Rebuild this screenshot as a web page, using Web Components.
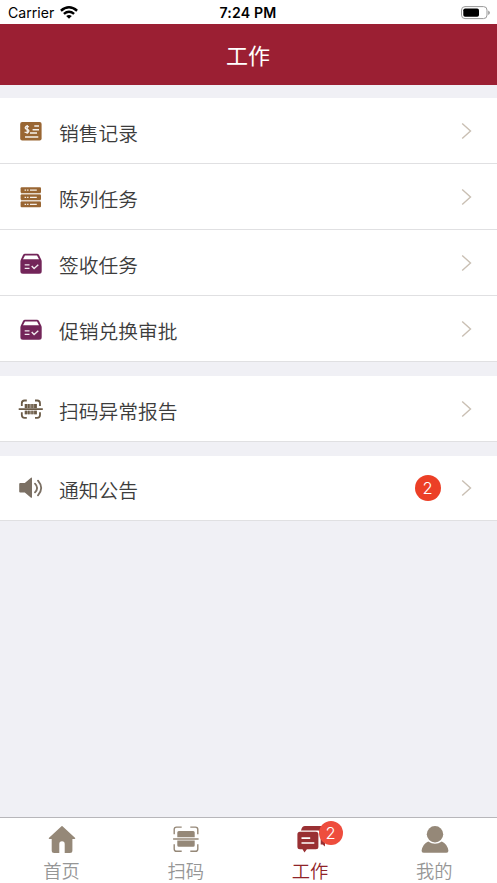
<!DOCTYPE html>
<html lang="zh-CN">
<head>
<meta charset="utf-8">
<meta name="viewport" content="width=device-width">
<title>工作</title>
<style>
html, body { margin: 0; height: 100%; overflow: hidden; background: #f0f0f5; }
body { font-family: "Noto Sans CJK SC", sans-serif; }
</style>
</head>
<body>
<work-app></work-app>
<script>
const ICONS = {
  card: `<rect x="3.2" y="5" width="21.4" height="18.6" rx="2" fill="#996633"/>
    <g fill="none" stroke="#fff" stroke-opacity=".9" stroke-width="1.5"><path d="M17.3 9.1h4.7M15.6 12.7h6.4M13 16.1h7M8 19.9h13.3"/><path stroke-width="1.3" d="M11.8 9.9Q9.5 8.5 8.5 10t1.6 2.3 1.4 2.5-3.9 .2M10.2 8v8.7"/></g>`,
  shelves: `<rect x="4" y="5" width="19.5" height="19" fill="#996633" opacity=".25"/><g fill="#996633"><rect x="3.6" y="4.3" width="20.4" height="5.8" rx="1"/><rect x="3.6" y="11.5" width="20.4" height="5.6" rx="1"/><rect x="3.6" y="18.5" width="20.4" height="5.8" rx="1"/></g>
    <g stroke="#fff" stroke-opacity=".9" stroke-width="1.3"><path d="M13 7.2h6.8M13 14.3h6.8M13 21.4h6.8"/><path d="M7.6 7.2h1.5m1 0h1.4M7.6 14.3h1.5m1 0h1.4M7.6 21.4h1.5m1 0h1.4"/></g>`,
  box: `<path fill="#732559" d="M8 4.8h12q1.3 0 2 1.2l2.2 4.5q.5 1 .5 2v9.8q0 2.5-2.5 2.5H5.9q-2.5 0-2.5-2.5v-9.8q0-1 .5-2L6 6q.7-1.2 2-1.2z"/><path fill="#fff" d="M8 6.4h12l2 3.8H6z"/><path fill="none" stroke="#fff" stroke-opacity=".9" stroke-width="1.4" d="M7.7 15.9h4.8M7.7 19.4h4.8M14.7 17.1l2.4 2.4 4.2-3.7"/>`,
  barcode: `<g fill="none" stroke="#6b5b47" stroke-width="1.8"><path d="M4.8 11V8.3Q4.8 5.5 7.6 5.5h2.2M18 5.5h2.2q2.8 0 2.8 2.8V11M4.8 17.3V20q0 2.8 2.8 2.8h2.2M18 22.8h2.2Q23 22.8 23 20v-2.7M1.7 14.2h24.1"/></g>
    <g fill="#6b5b47"><path opacity=".65" d="M7.8 9h12v4h-12zM7.8 15.8h12v3.5h-12z"/><path d="M7.8 9H10v4H7.8zM11 9h1.5v4H11zM14.5 9h1.2v4h-1.2zM17.2 9h2.6v4h-2.6zM7.8 15.8H10v3.5H7.8zM11 15.8h1.5v3.5H11zM14.5 15.8h1.2v3.5h-1.2zM17.2 15.8h2.6v3.5h-2.6z"/></g>`,
  speaker: `<path fill="#7b7064" d="M3.2 9h4.6l6.2-5.3q1-.5 1 .5v19q0 1-1 .5l-6.2-5.2H3.2q-1 0-1-1V10q0-1 1-1z"/><g fill="none" stroke="#7b7064" stroke-width="1.8" stroke-linecap="round"><path d="M18 9.6q4.2 4.2 0 8.8M21 6.6q6.4 7.4 0 14.8"/></g>`,
  home: `<path fill="#958878" d="M15.5 1.3Q16 .8 16.5 1.3L29.2 13q.3 1-.7 1h-2.1v11.5q0 2.5-2.5 2.5h-5.2v-9q0-2.8-2.7-2.8T13.3 19v9H8.2q-2.5 0-2.5-2.5V14H3.5q-1 0-.7-1z"/>`,
  scan: `<g fill="none" stroke="#958878" stroke-width="1.4"><path d="M4.2 9.2V4.5q0-2.4 2.4-2.4h5.1M20.3 2.1h5.1q2.4 0 2.4 2.4v4.7M4.2 19.2v4.7q0 2.4 2.4 2.4h5.1M20.3 26.3h5.1q2.4 0 2.4-2.4v-4.7M3.1 14h25.5"/></g><path fill="#958878" d="M7.3 12.3V7.5Q7.3 6 8.8 6h14.4q1.5 0 1.5 1.5v4.8zM7.3 15.6v4.7q0 1.5 1.5 1.5h14.4q1.5 0 1.5-1.5v-4.7z"/>`,
  chat: `<path fill="#993033" d="M6 5.4Q7 1 10 1h18q2 0 2 2v18.5l-2.5-2h-1.8V8q0-2.6-2.6-2.6z"/><path fill="#993033" d="M4.9 6.8h16q2.5 0 2.5 2.5v12.4q0 2.5-2.5 2.5h-9l-2.4 3.2-2-3.2H4.9q-2.5 0-2.5-2.5V9.3q0-2.5 2.5-2.5z"/><path stroke="#fff" stroke-width="1.7" d="M6.5 13.1h8.7M6.5 18h12.8"/>`,
  person: `<g fill="#958878"><circle cx="16" cy="9.2" r="8.2"/><path d="M9.2 16.4q6.8 4.8 13.6 0 5.5 2.4 6.6 9.2.2 2.2-2 2.2H4.6q-2.2 0-2-2.2 1.1-6.8 6.6-9.2z"/></g>`
};

class CountBadge extends HTMLElement {
  connectedCallback() {
    this.attachShadow({ mode: 'open' }).innerHTML = `<style>
      :host { display: flex; align-items: center; justify-content: center; width: var(--badge-size, 26px); height: var(--badge-size, 26px); border-radius: 50%; background: var(--badge-color, #ec3f26); color: #fff; font: 300 16.5px/1 Inter, Arial, sans-serif; }
    </style><slot></slot>`;
  }
}

class StatusBar extends HTMLElement {
  connectedCallback() {
    this.attachShadow({ mode: 'open' }).innerHTML = `<style>
      :host { display: grid; grid-template-columns: 1fr auto 1fr; align-items: center; height: 24px; box-sizing: border-box; padding: 1px 7px 0 8px; background: #fff; color: #000; font: 14.1px/22px Inter, sans-serif; }
      .left { display: flex; align-items: center; gap: 6px; }
      .time { font-weight: 600; letter-spacing: .18px; margin-right: 2px; }
      .right { justify-self: end; display: flex; }
      svg { display: block; }
    </style>
    <div class="left"><span>Carrier</span><svg width="18" height="14" viewBox="0 0 18 14"><g fill="none" stroke="#000" stroke-width="2.5"><path d="M.9 4.7q8.1-6.8 16.2 0M3.9 7.9q5.1-4.2 10.2 0"/></g><path d="M6.2 10q2.8-2.2 5.6 0L9 12.8z"/></svg></div>
    <div class="time">7:24 PM</div>
    <div class="right"><svg width="29" height="14" viewBox="0 0 29 14"><rect x=".5" y=".6" width="25.5" height="12" rx="3.5" fill="none" stroke="#999"/><rect x="2.3" y="2.4" width="15.7" height="8.4" rx="1.8"/><path fill="#999" d="M27.2 4.5q1.7 1 1.7 2.2t-1.7 2.2z"/></svg></div>`;
  }
}

class NavHeader extends HTMLElement {
  connectedCallback() {
    this.attachShadow({ mode: 'open' }).innerHTML = `<style>
      :host { display: flex; align-items: center; justify-content: center; height: 61px; box-sizing: border-box; padding: 0 1px 1px 0; background: #9b1f33; color: #fff; font-size: 22px; line-height: 32px; font-weight: 400; }
    </style><slot></slot>`;
  }
}

class MenuRow extends HTMLElement {
  connectedCallback() {
    const count = this.getAttribute('count');
    this.attachShadow({ mode: 'open' }).innerHTML = `<style>
      :host { display: flex; align-items: center; flex: 1; min-height: 0; box-sizing: border-box; padding: 1px 25.5px 0 17px; border-bottom: 1.5px solid #e0e0e2; }
      svg { display: block; }
      .label { flex: 1; margin-left: 14px; padding-top: 3px; font-size: 19.75px; line-height: 30px; font-weight: 350; color: #3c3c3c; }
      count-badge { margin-right: 20px; }
    </style>
    <svg width="28" height="28" viewBox="0 0 28 28">${ICONS[this.getAttribute('icon')]}</svg>
    <span class="label"><slot></slot></span>
    ${count ? `<count-badge>${count}</count-badge>` : ''}
    <svg width="11" height="18" viewBox="0 0 11 18"><path d="M1.2 1.4L9.5 9l-8.3 7.6" fill="none" stroke="#c9bfb3" stroke-width="1.4"/></svg>`;
  }
}

class MenuGroup extends HTMLElement {
  connectedCallback() {
    this.attachShadow({ mode: 'open' }).innerHTML = `<style>
      :host { display: flex; flex-direction: column; background: #fff; }
    </style><slot></slot>`;
  }
}

class TabItem extends HTMLElement {
  connectedCallback() {
    const count = this.getAttribute('count');
    this.attachShadow({ mode: 'open' }).innerHTML = `<style>
      :host { display: flex; flex-direction: column; align-items: center; flex: 1; padding-top: 7px; color: #969696; font-size: 18.3px; line-height: 28px; font-weight: 350; }
      :host([active]) { color: #8f2328; }
      .icon { position: relative; }
      svg { display: block; }
      .label { margin: 2px 1px 0 0; }
      count-badge { position: absolute; left: 24px; top: -4px; --badge-size: 24px; --badge-color: #ee4d3d; }
    </style>
    <div class="icon"><svg width="32" height="29" viewBox="0 0 32 29">${ICONS[this.getAttribute('icon')]}</svg>${count ? `<count-badge>${count}</count-badge>` : ''}</div>
    <span class="label"><slot></slot></span>`;
  }
}

class TabStrip extends HTMLElement {
  connectedCallback() {
    this.attachShadow({ mode: 'open' }).innerHTML = `<style>
      :host { display: flex; height: 66px; box-sizing: border-box; border-top: 1px solid #b7b6ba; background: #fff; }
    </style><slot></slot>`;
  }
}

class WorkApp extends HTMLElement {
  connectedCallback() {
    this.attachShadow({ mode: 'open' }).innerHTML = `<style>
      :host { display: flex; flex-direction: column; height: 883px; overflow: hidden; background: #f0f0f5; }
      status-bar, nav-header, tab-strip { flex: none; }
      main { flex: 1; display: flex; flex-direction: column; gap: 14px; padding-top: 13px; }
      .tasks { height: 264.4px; }
      .reports { height: 65.5px; }
      .notices { height: 65px; }
    </style>
    <status-bar></status-bar>
    <nav-header>工作</nav-header>
    <main>
      <menu-group class="tasks">
        <menu-row icon="card">销售记录</menu-row>
        <menu-row icon="shelves">陈列任务</menu-row>
        <menu-row icon="box">签收任务</menu-row>
        <menu-row icon="box">促销兑换审批</menu-row>
      </menu-group>
      <menu-group class="reports"><menu-row icon="barcode">扫码异常报告</menu-row></menu-group>
      <menu-group class="notices"><menu-row icon="speaker" count="2">通知公告</menu-row></menu-group>
    </main>
    <tab-strip>
      <tab-item icon="home">首页</tab-item>
      <tab-item icon="scan">扫码</tab-item>
      <tab-item icon="chat" count="2" active>工作</tab-item>
      <tab-item icon="person">我的</tab-item>
    </tab-strip>`;
  }
}

customElements.define('count-badge', CountBadge);
customElements.define('status-bar', StatusBar);
customElements.define('nav-header', NavHeader);
customElements.define('menu-row', MenuRow);
customElements.define('menu-group', MenuGroup);
customElements.define('tab-item', TabItem);
customElements.define('tab-strip', TabStrip);
customElements.define('work-app', WorkApp);
</script>
</body>
</html>
